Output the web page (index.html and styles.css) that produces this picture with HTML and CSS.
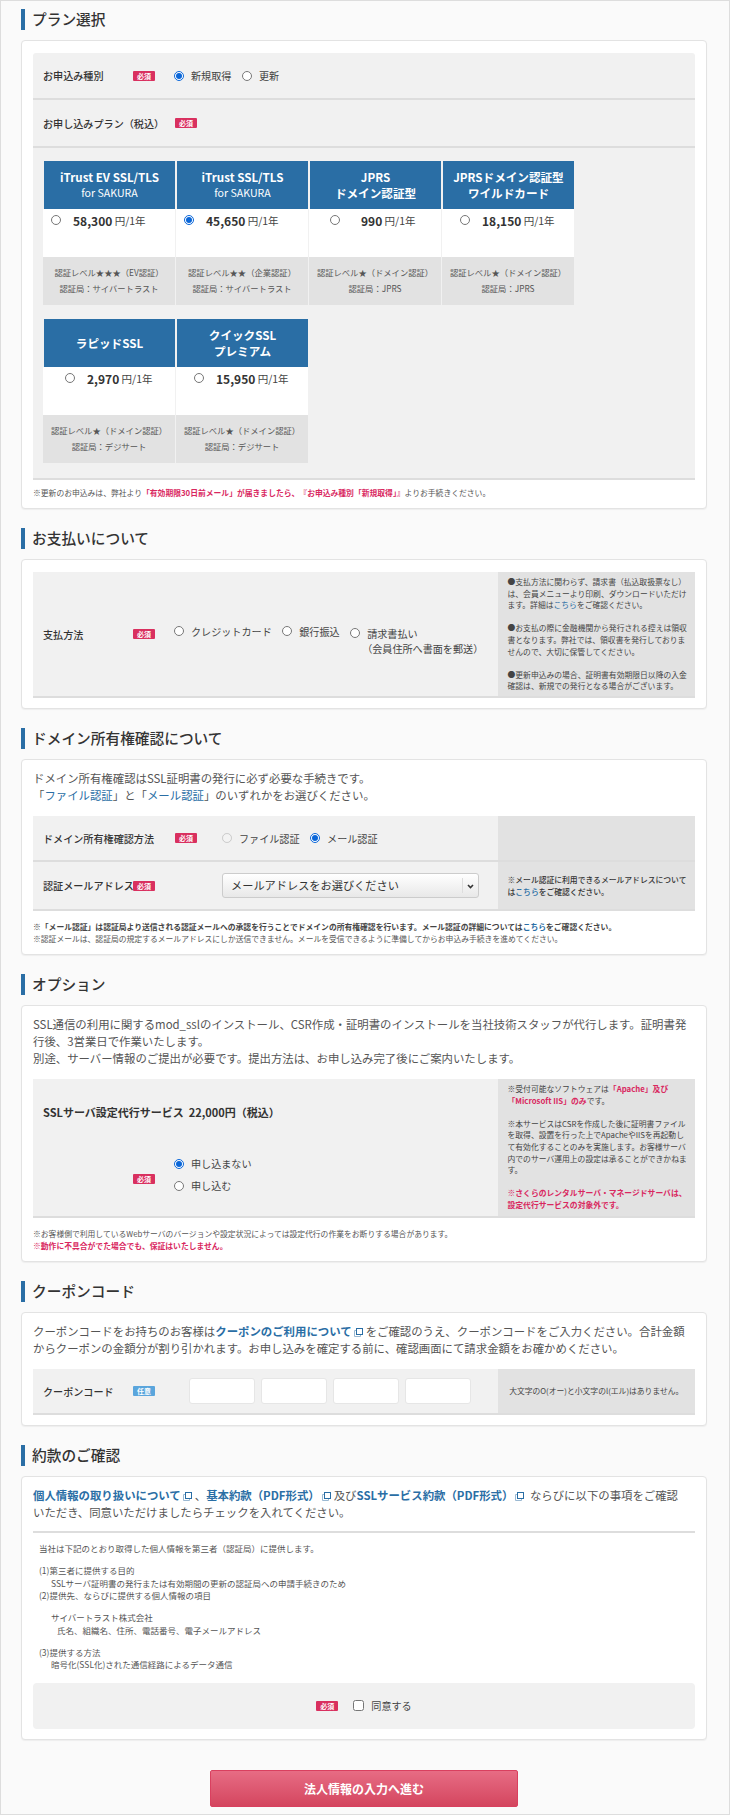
FILE: index.html
```html
<!DOCTYPE html>
<html lang="ja">
<head>
    <meta charset="UTF-8">
    <title>SSL申し込み</title>
    <link rel="stylesheet" href="styles.css">
</head>
<body>
<div class="page">

    <!-- プラン選択 -->
    <h2 class="ttl">プラン選択</h2>
    <div class="card">
        <div class="row r47">
            <div class="lbl">お申込み種別</div>
            <span class="req">必須</span>
            <div class="opts">
                <label class="opt"><input type="radio" name="kind" checked>新規取得</label>
                <label class="opt"><input type="radio" name="kind">更新</label>
            </div>
        </div>
        <div class="row r48">
            <div class="lbl lbl-auto">お申し込みプラン（税込）</div>
            <span class="req">必須</span>
        </div>
        <div class="plans">
            <div class="plan">
                <div class="plan-h">iTrust EV SSL/TLS<small>for SAKURA</small></div>
                <label class="plan-p pad8"><input type="radio" name="plan"><b>58,300</b> 円/1年</label>
                <div class="plan-c">認証レベル★★★（EV認証）<br>認証局：サイバートラスト</div>
            </div>
            <div class="plan">
                <div class="plan-h">iTrust SSL/TLS<small>for SAKURA</small></div>
                <label class="plan-p pad8"><input type="radio" name="plan" checked><b>45,650</b> 円/1年</label>
                <div class="plan-c">認証レベル★★（企業認証）<br>認証局：サイバートラスト</div>
            </div>
            <div class="plan">
                <div class="plan-h">JPRS<br>ドメイン認証型</div>
                <label class="plan-p pad21"><input type="radio" name="plan"><b class="wide">990</b> 円/1年</label>
                <div class="plan-c">認証レベル★（ドメイン認証）<br>認証局：JPRS</div>
            </div>
            <div class="plan">
                <div class="plan-h">JPRSドメイン認証型<br>ワイルドカード</div>
                <label class="plan-p pad18"><input type="radio" name="plan"><b>18,150</b> 円/1年</label>
                <div class="plan-c">認証レベル★（ドメイン認証）<br>認証局：JPRS</div>
            </div>
            <div class="plan">
                <div class="plan-h">ラピッドSSL</div>
                <label class="plan-p pad22"><input type="radio" name="plan"><b>2,970</b> 円/1年</label>
                <div class="plan-c">認証レベル★（ドメイン認証）<br>認証局：デジサート</div>
            </div>
            <div class="plan">
                <div class="plan-h">クイックSSL<br>プレミアム</div>
                <label class="plan-p pad18"><input type="radio" name="plan"><b>15,950</b> 円/1年</label>
                <div class="plan-c">認証レベル★（ドメイン認証）<br>認証局：デジサート</div>
            </div>
        </div>
        <p class="note note1">※更新のお申込みは、弊社より<b class="red">「有効期限30日前メール」が届きましたら、『お申込み種別「新規取得」』</b>よりお手続きください。</p>
    </div>

    <!-- お支払い -->
    <h2 class="ttl">お支払いについて</h2>
    <div class="card card-pb">
        <div class="row2 h126">
            <div class="row2-l center">
                <div class="lbl">支払方法</div>
                <span class="req">必須</span>
                <div class="opts opts-top">
                    <label class="opt"><input type="radio" name="pay">クレジットカード</label>
                    <label class="opt"><input type="radio" name="pay">銀行振込</label>
                    <label class="opt opt-two"><input type="radio" name="pay">請求書払い<span class="sub">（会員住所へ書面を郵送）</span></label>
                </div>
            </div>
            <div class="side">
                ●支払方法に関わらず、請求書（払込取扱票なし）は、会員メニューより印刷、ダウンロードいただけます。詳細は<a href="#">こちら</a>をご確認ください。<br><br>
                ●お支払の際に金融機関から発行される控えは領収書となります。弊社では、領収書を発行しておりませんので、大切に保管してください。<br><br>
                ●更新申込みの場合、証明書有効期限日以降の入金確認は、新規での発行となる場合がございます。
            </div>
        </div>
    </div>

    <!-- ドメイン -->
    <h2 class="ttl">ドメイン所有権確認について</h2>
    <div class="card">
        <p class="lead">ドメイン所有権確認はSSL証明書の発行に必ず必要な手続きです。<br>「<a href="#">ファイル認証</a>」と「<a href="#">メール認証</a>」のいずれかをお選びください。</p>
        <div class="row2 h46">
            <div class="row2-l center">
                <div class="lbl lbl-auto">ドメイン所有権確認方法</div>
                <span class="req">必須</span>
                <div class="opts opts-d">
                    <label class="opt"><input type="radio" name="dom" disabled>ファイル認証</label>
                    <label class="opt"><input type="radio" name="dom" checked>メール認証</label>
                </div>
            </div>
            <div class="side"></div>
        </div>
        <div class="row2 h49">
            <div class="row2-l center">
                <div class="lbl">認証メールアドレス</div>
                <span class="req">必須</span>
                <div class="fake-select">メールアドレスをお選びください
                    <svg class="sel-arrow" width="7" height="5" viewBox="0 0 7 5"><path d="M1 1l2.5 2.5L6 1" fill="none" stroke="#333" stroke-width="1.6"/></svg>
                </div>
            </div>
            <div class="side side-mid strong"><div>※メール認証に利用できるメールアドレスについては<a href="#">こちら</a>をご確認ください。</div></div>
        </div>
        <p class="note note2"><b class="dark">※「メール認証」は認証局より送信される認証メールへの承認を行うことでドメインの所有権確認を行います。メール認証の詳細については<a href="#">こちら</a>をご確認ください。</b><br>※認証メールは、認証局の規定するメールアドレスにしか送信できません。メールを受信できるように準備してからお申込み手続きを進めてください。</p>
    </div>

    <!-- オプション -->
    <h2 class="ttl">オプション</h2>
    <div class="card">
        <p class="lead">SSL通信の利用に関するmod_sslのインストール、CSR作成・証明書のインストールを当社技術スタッフが代行します。証明書発<br>行後、3営業日で作業いたします。<br>別途、サーバー情報のご提出が必要です。提出方法は、お申し込み完了後にご案内いたします。</p>
        <div class="row2 h139">
            <div class="row2-l col">
                <div class="lbl lbl-auto opt-ttl">SSLサーバ設定代行サービス &nbsp;22,000円（税込）</div>
                <div class="opt-sel">
                    <span class="req">必須</span>
                    <div class="opts-v">
                        <label class="opt"><input type="radio" name="svc" checked>申し込まない</label>
                        <label class="opt"><input type="radio" name="svc">申し込む</label>
                    </div>
                </div>
            </div>
            <div class="side">
                ※受付可能なソフトウェアは<b class="red">「Apache」及び<br>「Microsoft IIS」のみ</b>です。<br><br>
                ※本サービスはCSRを作成した後に証明書ファイルを取得、設置を行った上でApacheやIISを再起動して有効化することのみを実施します。お客様サーバ内でのサーバ運用上の設定は承ることができかねます。<br><br>
                <b class="red">※さくらのレンタルサーバ・マネージドサーバは、設定代行サービスの対象外です。</b>
            </div>
        </div>
        <p class="note note2">※お客様側で利用しているWebサーバのバージョンや設定状況によっては設定代行の作業をお断りする場合があります。<br><b class="red">※動作に不具合がでた場合でも、保証はいたしません。</b></p>
    </div>

    <!-- クーポン -->
    <h2 class="ttl">クーポンコード</h2>
    <div class="card card-pb">
        <p class="lead">クーポンコードをお持ちのお客様は<a class="blue-b" href="#">クーポンのご利用について<svg class="ext" width="9" height="9" viewBox="0 0 9 9"><rect x="2.5" y="0.5" width="6" height="6" fill="#fff" stroke="#2a6ea5"/><path d="M2 2.5H.5v6h6V7" fill="none" stroke="#9bb9d2"/></svg></a>をご確認のうえ、クーポンコードをご入力ください。合計金額<br>からクーポンの金額分が割り引かれます。お申し込みを確定する前に、確認画面にて請求金額をお確かめください。</p>
        <div class="row2 h46">
            <div class="row2-l center">
                <div class="lbl">クーポンコード</div>
                <span class="req any">任意</span>
                <div class="codes">
                    <input type="text" class="code">
                    <input type="text" class="code">
                    <input type="text" class="code">
                    <input type="text" class="code">
                </div>
            </div>
            <div class="side side-mid tac">大文字のO(オー)と小文字のl(エル)はありません。</div>
        </div>
    </div>

    <!-- 約款 -->
    <h2 class="ttl">約款のご確認</h2>
    <div class="card">
        <p class="lead lead-hr"><a class="blue-b" href="#">個人情報の取り扱いについて<svg class="ext" width="9" height="9" viewBox="0 0 9 9"><rect x="2.5" y="0.5" width="6" height="6" fill="#fff" stroke="#2a6ea5"/><path d="M2 2.5H.5v6h6V7" fill="none" stroke="#9bb9d2"/></svg></a>、<a class="blue-b" href="#">基本約款（PDF形式）<svg class="ext" width="9" height="9" viewBox="0 0 9 9"><rect x="2.5" y="0.5" width="6" height="6" fill="#fff" stroke="#2a6ea5"/><path d="M2 2.5H.5v6h6V7" fill="none" stroke="#9bb9d2"/></svg></a>及び<a class="blue-b" href="#">SSLサービス約款（PDF形式）<svg class="ext" width="9" height="9" viewBox="0 0 9 9"><rect x="2.5" y="0.5" width="6" height="6" fill="#fff" stroke="#2a6ea5"/><path d="M2 2.5H.5v6h6V7" fill="none" stroke="#9bb9d2"/></svg></a> ならびに以下の事項をご確認<br>いただき、同意いただけましたらチェックを入れてください。</p>
        <div class="terms">
            <p>当社は下記のとおり取得した個人情報を第三者（認証局）に提供します。</p>
            <p>(1)第三者に提供する目的<br><span class="in1">SSLサーバ証明書の発行または有効期間の更新の認証局への申請手続きのため</span><br>(2)提供先、ならびに提供する個人情報の項目</p>
            <p><span class="in1">サイバートラスト株式会社</span><br><span class="in2">氏名、組織名、住所、電話番号、電子メールアドレス</span></p>
            <p>(3)提供する方法<br><span class="in1">暗号化(SSL化)された通信経路によるデータ通信</span></p>
        </div>
        <div class="agree">
            <span class="req">必須</span>
            <label class="opt"><input type="checkbox">同意する</label>
        </div>
    </div>

    <button class="next" type="button">法人情報の入力へ進む</button>
</div>
</body>
</html>
```

FILE: styles.css
```css
*{
    margin: 0;
    padding: 0;
    box-sizing: border-box;
}
body{
    width: 730px;
    height: 1815px;
    font-family: "Noto Sans CJK JP", "Liberation Sans", sans-serif;
    font-size: 10.1px;
    color: #444;
}
.page{
    height: 1815px;
    background-color: #fafafa;
    border: 1px solid #ddd;
    padding: 8px 22px 0 20px;
}
a{
    color: #2a6ea5;
    text-decoration: none;
}
.red{
    color: #d9285f;
}
.dark{
    color: #444;
}
.ttl{
    height: 21px;
    line-height: 20px;
    border-left: 4px solid #2a6ea5;
    padding-left: 7px;
    font-size: 14.7px;
    font-weight: 500;
    color: #333;
}
.card{
    margin: 10px 0 19px;
    background-color: #fff;
    border: 1px solid #e3e3e3;
    border-radius: 4px;
    padding: 12px 11px 0;
    box-shadow: 0 1px 1px #eee;
}
.card-pb{
    padding-bottom: 10px;
}
.row{
    display: flex;
    align-items: center;
    padding-left: 10px;
    background-color: #f1f1f1;
    border-bottom: 2px solid #ddd;
}
.r47{
    height: 47px;
    border-radius: 3px 3px 0 0;
}
.r48{
    height: 48px;
}
.lbl{
    width: 90px;
    flex-shrink: 0;
    color: #333;
    font-weight: 500;
    white-space: nowrap;
}
.lbl-auto{
    width: 110px;
    margin-right: 22px;
}
.r48 .lbl-auto{
    width: 132px;
    margin-right: 0;
}
.req{
    display: inline-block;
    width: 22px;
    height: 10px;
    line-height: 10px;
    flex-shrink: 0;
    background-color: #d9305f;
    color: #fff;
    font-size: 7px;
    font-weight: 700;
    text-align: center;
    border-radius: 1px;
}
.any{
    background-color: #5aa5dc;
}
.opts{
    display: flex;
    gap: 10.5px;
    margin-left: 19px;
}
.opt{
    display: inline-flex;
    align-items: center;
    gap: 7px;
    white-space: nowrap;
}
input[type=radio]{
    width: 10px;
    height: 10px;
    flex-shrink: 0;
    accent-color: #0a66d8;
}
input[type=checkbox]{
    width: 11px;
    height: 11px;
    accent-color: #0a66d8;
}

/* プラン */
.plans{
    display: grid;
    grid-template-columns: repeat(4, 133px);
    row-gap: 13px;
    padding: 12px 0 15px 10px;
    background-color: #f1f1f1;
    border-bottom: 2px solid #ddd;
}
.plan{
    border-right: 1px solid #f1f1f1;
}
.plan-h{
    display: flex;
    flex-direction: column;
    justify-content: center;
    height: 48px;
    margin: 1px 0 0 1px;
    background-color: #2a6ea5;
    color: #fff;
    font-size: 11.6px;
    font-weight: 700;
    line-height: 16px;
    text-align: center;
}
.plan-h small{
    font-size: 10.6px;
    font-weight: 400;
}
.plan-p{
    display: flex;
    align-items: flex-start;
    height: 48px;
    background-color: #fff;
    padding-top: 6px;
    font-size: 10.5px;
    line-height: 11px;
    white-space: pre;
}
.plan-p b{
    font-size: 12px;
    margin-left: 12px;
    color: #333;
}
.plan-p b.wide{
    margin-left: 21px;
}
.pad8{
    padding-left: 8px;
}
.pad18{
    padding-left: 18px;
}
.pad21{
    padding-left: 21px;
}
.pad22{
    padding-left: 22px;
}
.plan-c{
    height: 48px;
    background-color: #e2e2e2;
    padding-top: 7px;
    font-size: 8.3px;
    line-height: 16px;
    text-align: center;
    white-space: nowrap;
    color: #555;
}
.note{
    font-size: 7.8px;
    color: #555;
}
.note1{
    height: 28px;
    padding-top: 7px;
    line-height: 11.5px;
}
.note2{
    height: 43px;
    padding-top: 10px;
    line-height: 11.5px;
}

/* 2カラムの行 */
.row2{
    display: flex;
    background-color: #f1f1f1;
    border-bottom: 2px solid #ddd;
}
.row2-l{
    display: flex;
    flex: 1;
    padding-left: 10px;
}
.center{
    align-items: center;
}
.col{
    flex-direction: column;
}
.side{
    width: 197.5px;
    flex-shrink: 0;
    background-color: #e2e2e2;
    padding: 4px 6px 3px 10px;
    font-size: 7.8px;
    line-height: 11.6px;
}
.side-mid{
    display: flex;
    align-items: center;
}
.strong{
    font-weight: 500;
    color: #333;
}
.tac{
    justify-content: center;
    padding: 0;
}
.opts-top{
    align-items: flex-start;
    margin-top: -4px;
}
.opt-two{
    position: relative;
    margin-top: 2px;
}
.sub{
    position: absolute;
    top: 15px;
    left: 12px;
}
.opts-d{
    margin-left: 25px;
}
.h46{
    height: 46px;
}
.h49{
    height: 49px;
}
.h126{
    height: 126px;
}
.h139{
    height: 139px;
}
.lead{
    font-size: 11.4px;
    line-height: 17px;
    color: #555;
    margin-top: -2px;
    margin-bottom: 12px;
    white-space: nowrap;
}
.fake-select{
    position: relative;
    width: 257px;
    height: 25px;
    margin-left: 67px;
    padding-left: 8px;
    border: 1px solid #ccc;
    border-radius: 3px;
    background: linear-gradient(#fff, #e8e8e8);
    font-size: 11.2px;
    line-height: 23px;
    color: #333;
}
.fake-select::after{
    content: "";
    position: absolute;
    right: 15px;
    top: 4px;
    bottom: 4px;
    border-left: 1px solid #ddd;
}
.sel-arrow{
    position: absolute;
    right: 4px;
    top: 10px;
}
.opt-ttl{
    width: auto;
    margin: 25px 0 0;
    font-size: 11px;
    font-weight: 700;
}
.opt-sel{
    display: flex;
    align-items: center;
    padding-left: 90px;
    margin-top: 38px;
}
.opt-sel .req{
    margin-top: 8px;
}
.opt-sel .opts-v{
    margin-left: 19px;
    display: flex;
    flex-direction: column;
    gap: 11px;
}
.opts-v .opt{
    height: 11px;
}
.blue-b{
    font-weight: 700;
}
.ext{
    margin: 0 3px 0 2px;
    vertical-align: -1px;
}
.codes{
    display: flex;
    gap: 6px;
    margin-left: 34px;
}
.code{
    width: 66px;
    height: 26px;
    background-color: #fff;
    border: 1px solid #e6e6e6;
    border-radius: 3px;
}
.lead-hr{
    padding-bottom: 10px;
    border-bottom: 2px solid #ddd;
    margin-bottom: 0;
}
.terms{
    padding: 9px 0 12px 6px;
    font-size: 8.5px;
    line-height: 12.5px;
    color: #555;
}
.terms p{
    margin-bottom: 9.5px;
}
.terms p:last-child{
    margin-bottom: 0;
}
.in1{
    margin-left: 12px;
}
.in2{
    margin-left: 18px;
}
.agree{
    display: flex;
    justify-content: center;
    align-items: center;
    gap: 15px;
    height: 46px;
    margin-bottom: 10px;
    background-color: #f1f1f1;
    border-radius: 4px;
}
.next{
    display: block;
    width: 308px;
    height: 37px;
    margin: 30px 0 0 189px;
    background: linear-gradient(#e76c84, #d4465f);
    border: 1px solid #d9405f;
    border-radius: 2px;
    color: #fff;
    font-family: inherit;
    font-size: 12px;
    font-weight: 700;
}
```
